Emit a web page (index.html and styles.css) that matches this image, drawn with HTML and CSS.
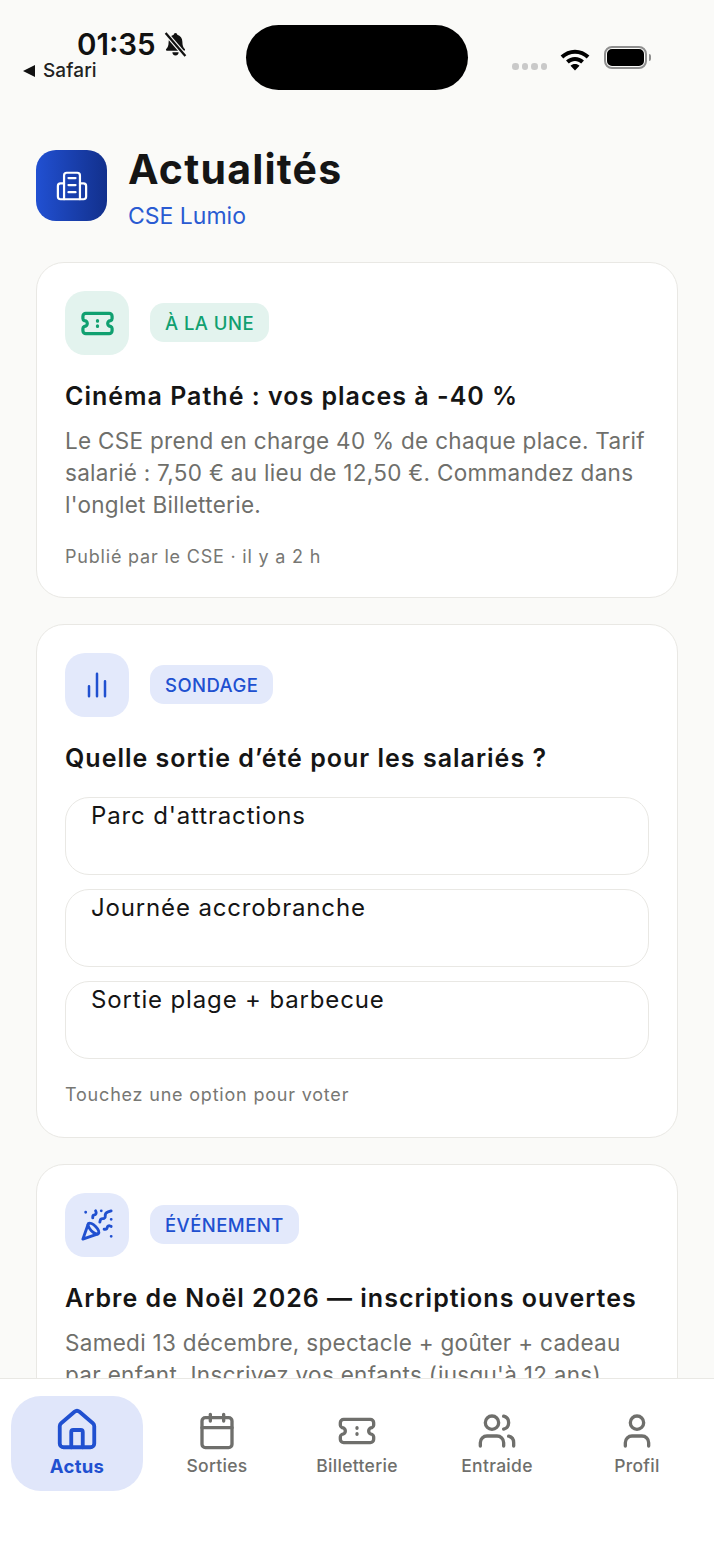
FILE: index.html
```html
<!DOCTYPE html>
<html lang="fr">
<head>
<meta charset="utf-8">
<title>Actualités</title>
<link rel="stylesheet" href="styles.css">
</head>
<body>
<div class="screen">
  <header class="status">
    <div class="status-left">
      <div class="clock"><span class="time">01:35</span>
        <svg class="bell" viewBox="0 0 24 24"><path fill="#111" d="M12 1c-1 0-1.6.7-1.7 1.6C7.3 3.4 5.4 6 5.4 9.4c0 3.600-.8 5.600-2.300 7-.6.6-.2 1.600.6 1.600h16.600c.8 0 1.200-1 .6-1.600-1.500-1.400-2.300-3.400-2.300-7 0-3.400-1.900-6-4.900-6.800C13.600 1.700 13 1 12 1zM9 19.500a3 3 0 0 0 6 0z"/><path d="M2.500 1 21.500 23" stroke="#fafaf8" stroke-width="4.400"/><path d="M2.500 1 21.500 23" stroke="#111" stroke-width="2.200"/></svg>
      </div>
      <div class="back"><span class="tri"></span>Safari</div>
    </div>
    <div class="island"></div>
    <div class="status-right">
      <div class="dots"><i></i><i></i><i></i><i></i></div>
      <svg class="wifi" viewBox="0 0 30 22"><path d="M15 2.500C9.800 2.500 5.300 4.500 1.500 8l2.500 2.800C7 8 10.800 6.300 15 6.300S23 8 26 10.800L28.500 8C24.700 4.500 20.200 2.500 15 2.500zM15 9.300c-3.200 0-6 1.200-8.400 3.300l2.600 2.800c1.600-1.400 3.600-2.300 5.800-2.300s4.200.9 5.800 2.300l2.600-2.800C21 10.500 18.200 9.300 15 9.300zM15 16c-1.700 0-3.100.6-4.200 1.600L15 22l4.200-4.400C18.100 16.600 16.700 16 15 16z"/></svg>
      <div class="battery"><span class="cell"></span><span class="nub"></span></div>
    </div>
  </header>

  <section class="title-row">
    <div class="logo">
      <svg viewBox="0 0 36 34" fill="none" stroke="#fff" stroke-width="2.500" stroke-linecap="round" stroke-linejoin="round"><path d="M9 32V5a3 3 0 0 1 3-3h12a3 3 0 0 1 3 3v27"/><path d="M9 14H5a3 3 0 0 0-3 3v12a3 3 0 0 0 3 3h26a3 3 0 0 0 3-3V17a3 3 0 0 0-3-3h-4"/><path d="M14 8h8M14 16h8M14 24h8"/></svg>
    </div>
    <div>
      <h1 class="page-title">Actualités</h1>
      <div class="org">CSE Lumio</div>
    </div>
  </section>

  <main class="feed">
    <article class="card">
      <div class="card-head">
        <div class="tile tile-green">
          <svg class="ico-ticket" viewBox="0 0 24 24" fill="none" stroke="currentColor" stroke-width="2.200" stroke-linecap="round" stroke-linejoin="round"><path d="M4 5h16a2 2 0 0 1 2 2v1.500c0 .8-.5 1.200-1 1.500a2 2 0 0 0 0 4c.5.3 1 .7 1 1.500V17a2 2 0 0 1-2 2H4a2 2 0 0 1-2-2v-1.500c0-.8.5-1.200 1-1.500a2 2 0 0 0 0-4C2.500 9.700 2 9.300 2 8.500V7a2 2 0 0 1 2-2z"/><path d="M12 10v.4M12 13.600v.4"/></svg>
        </div>
        <span class="badge badge-green">À LA UNE</span>
      </div>
      <h2 class="card-title">Cinéma Pathé : vos places à -40 %</h2>
      <p class="card-text">Le CSE prend en charge 40 % de chaque place. Tarif salarié : 7,50 € au lieu de 12,50 €. Commandez dans l'onglet Billetterie.</p>
      <p class="meta">Publié par le CSE · il y a 2 h</p>
    </article>

    <article class="card">
      <div class="card-head">
        <div class="tile tile-blue">
          <svg class="ico-chart" viewBox="0 0 24 24" fill="none" stroke="currentColor" stroke-width="2" stroke-linecap="round"><path d="M5.600 21v-8M12 21V3M18.400 21V9"/></svg>
        </div>
        <span class="badge badge-blue">SONDAGE</span>
      </div>
      <h2 class="card-title">Quelle sortie d’été pour les salariés ?</h2>
      <div class="options">
        <div class="option">Parc d'attractions</div>
        <div class="option">Journée accrobranche</div>
        <div class="option">Sortie plage + barbecue</div>
      </div>
      <p class="meta meta-poll">Touchez une option pour voter</p>
    </article>

    <article class="card">
      <div class="card-head">
        <div class="tile tile-blue">
          <svg class="ico-party" viewBox="0 0 24 24" fill="none" stroke="currentColor" stroke-width="2" stroke-linecap="round" stroke-linejoin="round"><path d="M5.800 11.300 2 22l10.700-3.790"/><path d="M4 3h.01M22 8h.01M15 2h.01M22 20h.01"/><path d="m22 2-2.240.75a2.900 2.900 0 0 0-1.960 3.120c.1.860-.57 1.630-1.450 1.630h-.38c-.86 0-1.600.6-1.760 1.440L14 10"/><path d="m22 13-.82-.33c-.86-.34-1.820.2-1.980 1.110-.11.7-.72 1.220-1.430 1.220H17"/><path d="m11 2 .33.82c.34.860-.2 1.820-1.110 1.980C9.520 4.900 9 5.520 9 6.230V7"/><path d="M11 13c1.930 1.930 2.830 4.170 2 5-.83.83-3.070-.07-5-2-1.930-1.930-2.830-4.170-2-5 .83-.83 3.070.07 5 2Z"/></svg>
        </div>
        <span class="badge badge-blue">ÉVÉNEMENT</span>
      </div>
      <h2 class="card-title">Arbre de Noël 2026 — inscriptions ouvertes</h2>
      <p class="card-text">Samedi 13 décembre, spectacle + goûter + cadeau par enfant. Inscrivez vos enfants (jusqu'à 12 ans).</p>
    </article>
  </main>

  <nav class="tabbar">
    <a class="tab tab-active">
      <svg viewBox="0 0 24 24" fill="none" stroke="currentColor" stroke-width="2" stroke-linecap="round" stroke-linejoin="round"><path d="M15 21v-8a1 1 0 0 0-1-1h-4a1 1 0 0 0-1 1v8"/><path d="M3 10a2 2 0 0 1 .709-1.528l7-5.999a2 2 0 0 1 2.582 0l7 5.999A2 2 0 0 1 21 10v9a2 2 0 0 1-2 2H5a2 2 0 0 1-2-2z"/></svg>
      <span>Actus</span>
    </a>
    <a class="tab">
      <svg viewBox="0 0 24 24" fill="none" stroke="currentColor" stroke-width="2" stroke-linecap="round" stroke-linejoin="round"><path d="M8 2v4M16 2v4"/><rect x="3" y="4" width="18" height="18" rx="2"/><path d="M3 10h18"/></svg>
      <span>Sorties</span>
    </a>
    <a class="tab">
      <svg viewBox="0 0 24 24" fill="none" stroke="currentColor" stroke-width="2" stroke-linecap="round" stroke-linejoin="round"><path d="M4 5h16a2 2 0 0 1 2 2v1.500c0 .8-.5 1.200-1 1.500a2 2 0 0 0 0 4c.5.3 1 .7 1 1.500V17a2 2 0 0 1-2 2H4a2 2 0 0 1-2-2v-1.500c0-.8.5-1.200 1-1.500a2 2 0 0 0 0-4C2.500 9.700 2 9.300 2 8.500V7a2 2 0 0 1 2-2z"/><path d="M12 10v.4M12 13.600v.4"/></svg>
      <span>Billetterie</span>
    </a>
    <a class="tab">
      <svg viewBox="0 0 24 24" fill="none" stroke="currentColor" stroke-width="2" stroke-linecap="round" stroke-linejoin="round"><path d="M16 21v-2a4 4 0 0 0-4-4H6a4 4 0 0 0-4 4v2"/><path d="M16 3.128a4 4 0 0 1 0 7.744"/><path d="M22 21v-2a4 4 0 0 0-3-3.870"/><circle cx="9" cy="7" r="4"/></svg>
      <span>Entraide</span>
    </a>
    <a class="tab">
      <svg viewBox="0 0 24 24" fill="none" stroke="currentColor" stroke-width="2" stroke-linecap="round" stroke-linejoin="round"><path d="M19 21v-2a4 4 0 0 0-4-4H9a4 4 0 0 0-4 4v2"/><circle cx="12" cy="7" r="4"/></svg>
      <span>Profil</span>
    </a>
  </nav>
</div>
</body>
</html>
```

FILE: styles.css
```css
* { box-sizing: border-box; }
html, body { margin: 0; padding: 0; }
body { background: #fafaf8; color: #151515; font-family: "Inter", "Liberation Sans", sans-serif; }
.screen { width: 714px; height: 1552px; display: flex; flex-direction: column; overflow: hidden; background: #fafaf8; }

.status { display: flex; height: 150px; flex-shrink: 0; padding-top: 25px; align-items: flex-start; }
.status-left { width: 246px; padding: 1px 0 0 23px; }
.clock { display: flex; align-items: center; gap: 7px; padding-left: 54px; height: 36px; }
.time { font-size: 29.5px; font-weight: 600; line-height: 36px; color: #111; }
.bell { width: 25px; height: 25px; }
.back { display: flex; align-items: center; gap: 8px; margin-top: -3px; font-size: 19px; font-weight: 500; line-height: 24px; letter-spacing: 0.1px; color: #222; }
.tri { width: 0; height: 0; border-style: solid; border-width: 6px 12px 6px 0; border-color: transparent #111 transparent transparent; }
.island { width: 222px; height: 65px; border-radius: 33px; background: #000; }
.status-right { flex: 1; display: flex; align-items: center; padding: 22px 0 0 44px; }
.dots { display: flex; gap: 3px; margin-top: 15px; }
.dots i { width: 6.5px; height: 6.5px; border-radius: 50%; background: #c9c9c9; }
.wifi { width: 32px; height: 23.5px; margin-left: 11.5px; }
.battery { display: flex; align-items: center; margin: -2px 0 0 14px; }
.cell { width: 41px; height: 21px; border-radius: 7px; background: #000; box-shadow: inset 0 0 0 2px #fafaf8; outline: 2px solid #8f8f8f; outline-offset: -1px; }
.nub { width: 2px; height: 7px; margin-left: 3px; border-radius: 0 2px 2px 0; background: #8f8f8f; }

.title-row { display: flex; align-items: flex-start; gap: 22px; padding: 0 36px; height: 112px; flex-shrink: 0; }
.logo { width: 71px; height: 71px; border-radius: 20px; background: linear-gradient(90deg, #2150d2, #12308c); display: flex; align-items: center; justify-content: center; }
.logo svg { width: 32px; height: 30px; }
.page-title { margin: -4px 0 0 -1px; font-size: 41px; line-height: 46px; font-weight: 700; color: #151515; letter-spacing: 1.2px; }
.org { margin: 10px 0 0 -1px; font-size: 23px; line-height: 28px; color: #2a5bd2; }

.feed { flex: 1; min-height: 0; overflow: hidden; display: flex; flex-direction: column; gap: 26px; padding: 0 36px; }
.card { flex-shrink: 0; background: #fff; border: 1px solid #e9e8e4; border-radius: 28px; padding: 28px 28px 28px; }
.card-head { display: flex; align-items: center; gap: 21px; }
.tile { width: 64px; height: 64px; border-radius: 20px; display: flex; align-items: center; justify-content: center; }
.tile-green { background: #e3f3ee; color: #10a070; }
.tile-blue { background: #e3e9fb; color: #2050d0; }
.ico-ticket { width: 35px; height: 35px; }
.ico-chart { width: 30px; height: 30px; }
.ico-party { width: 34px; height: 34px; }
.badge { height: 39px; margin-bottom: 1px; display: flex; align-items: center; padding: 0 15px; border-radius: 14px; font-size: 18.5px; font-weight: 500; letter-spacing: 0.45px; }
.badge-green { background: #e3f3ee; color: #10a070; }
.badge-blue { background: #e3e9fb; color: #2050d0; }
.card-title { margin: 24.5px 0 0; font-size: 25px; line-height: 32px; font-weight: 600; letter-spacing: 1px; color: #151515; }
.card-text { margin: 13.5px 0 0; font-size: 22.5px; line-height: 32px; letter-spacing: 0.3px; color: #6f6f6b; }
.meta { margin: 24px 0 0; font-size: 18px; line-height: 24px; letter-spacing: 0.8px; color: #777773; }
.meta-poll { margin: 24px 0 2px; }
.options { margin-top: 23.5px; display: flex; flex-direction: column; gap: 14px; }
.option { height: 78px; border: 1px solid #e9e8e4; border-radius: 24px; padding: 2px 25px 0; font-size: 24px; line-height: 32px; letter-spacing: 0.85px; color: #151515; }

.tabbar { height: 174px; flex-shrink: 0; background: #fff; border-top: 1px solid #e9e8e4; display: flex; align-items: flex-start; padding: 17px 0 0 7px; }
.tab { width: 140px; height: 95px; display: flex; flex-direction: column; align-items: center; padding-top: 15px; color: #6f6f6c; font-size: 17.5px; font-weight: 500; line-height: 22px; letter-spacing: 0.3px; gap: 4px; }
.tab svg { width: 40px; height: 40px; }
.tab-active { width: 132px; margin: 0 4px; border-radius: 30px; background: #e0e6fa; color: #2050d0; font-size: 18.5px; font-weight: 700; padding-top: 11px; gap: 2px; }
.tab-active svg { width: 46px; height: 46px; }
```
